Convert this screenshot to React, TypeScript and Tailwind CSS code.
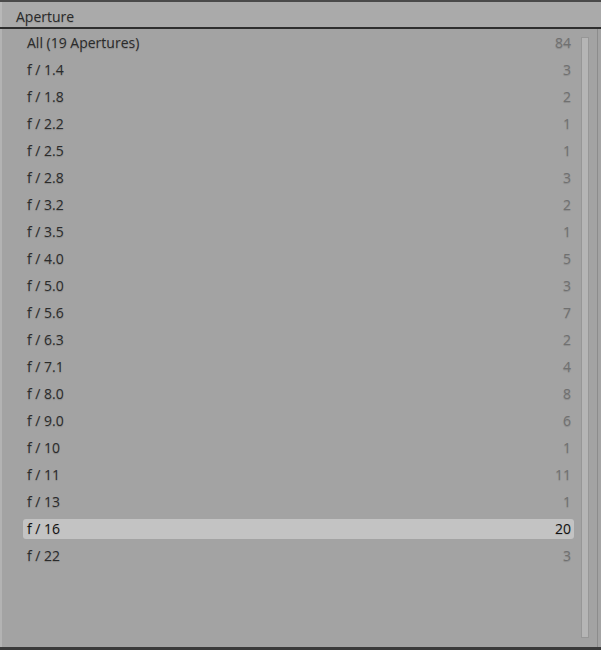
import React from "react";

const rows: [string, number][] = [
  ["All (19 Apertures)", 84],
  ["f / 1.4", 3],
  ["f / 1.8", 2],
  ["f / 2.2", 1],
  ["f / 2.5", 1],
  ["f / 2.8", 3],
  ["f / 3.2", 2],
  ["f / 3.5", 1],
  ["f / 4.0", 5],
  ["f / 5.0", 3],
  ["f / 5.6", 7],
  ["f / 6.3", 2],
  ["f / 7.1", 4],
  ["f / 8.0", 8],
  ["f / 9.0", 6],
  ["f / 10", 1],
  ["f / 11", 11],
  ["f / 13", 1],
  ["f / 16", 20],
  ["f / 22", 3],
];

export default function App() {
  return (
    <div
      className="w-[601px] h-[650px] flex flex-col bg-[#a3a3a3] overflow-hidden text-[14px]"
      style={{ fontFamily: '"Open Sans", "Liberation Sans", sans-serif' }}
    >
      <div className="h-[2px] bg-[#4a4a4a]" />
      <div className="h-[25px] flex items-center pt-[3px] bg-[#aaaaaa] border-l-[2px] border-l-[#b8b8b8] pl-[14px] text-[#2a2a2a] [text-shadow:0_1px_1px_rgba(0,0,0,0.15)]">
        Aperture
      </div>
      <div className="h-[2px] bg-[#2e2e2e]" />
      <div className="flex-1 flex border-l-[2px] border-l-[#b3b3b3] border-r-[1px] border-r-[#8c8c8c] mr-[3px]">
        <div className="flex-1 pl-[21px] pr-[7px] pt-[4px]">
          {rows.map(([label, count]) => {
            const sel = label === "f / 16";
            return (
              <div
                key={label}
                className={
                  "h-[20px] mb-[7px] flex items-center justify-between rounded-[3px] pl-[4px] pr-[3px] " +
                  (sel ? "bg-[#c3c3c3]" : "")
                }
              >
                <span
                  className={
                    "-mt-[2px] " +
                    (sel
                      ? "text-[#111111] [text-shadow:0_1px_1px_rgba(0,0,0,0.12)]"
                      : "text-[#2b2b2b] [text-shadow:0_1px_1px_rgba(0,0,0,0.18)]")
                  }
                >
                  {label}
                </span>
                <span
                  className={
                    "-mt-[2px] " +
                    (sel
                      ? "text-[#111111] [text-shadow:0_1px_1px_rgba(0,0,0,0.12)]"
                      : "text-[#707070] [text-shadow:0_1px_1px_rgba(0,0,0,0.15)]")
                  }
                >
                  {count}
                </span>
              </div>
            );
          })}
        </div>
        <div className="w-[16px] pt-[8px] pb-[9px] pr-[8px]">
          <div className="h-full w-[8px] bg-[#b5b5b5] border border-[#979797]" />
        </div>
      </div>
      <div className="h-[3px] bg-[#3a3a3a]" />
    </div>
  );
}
